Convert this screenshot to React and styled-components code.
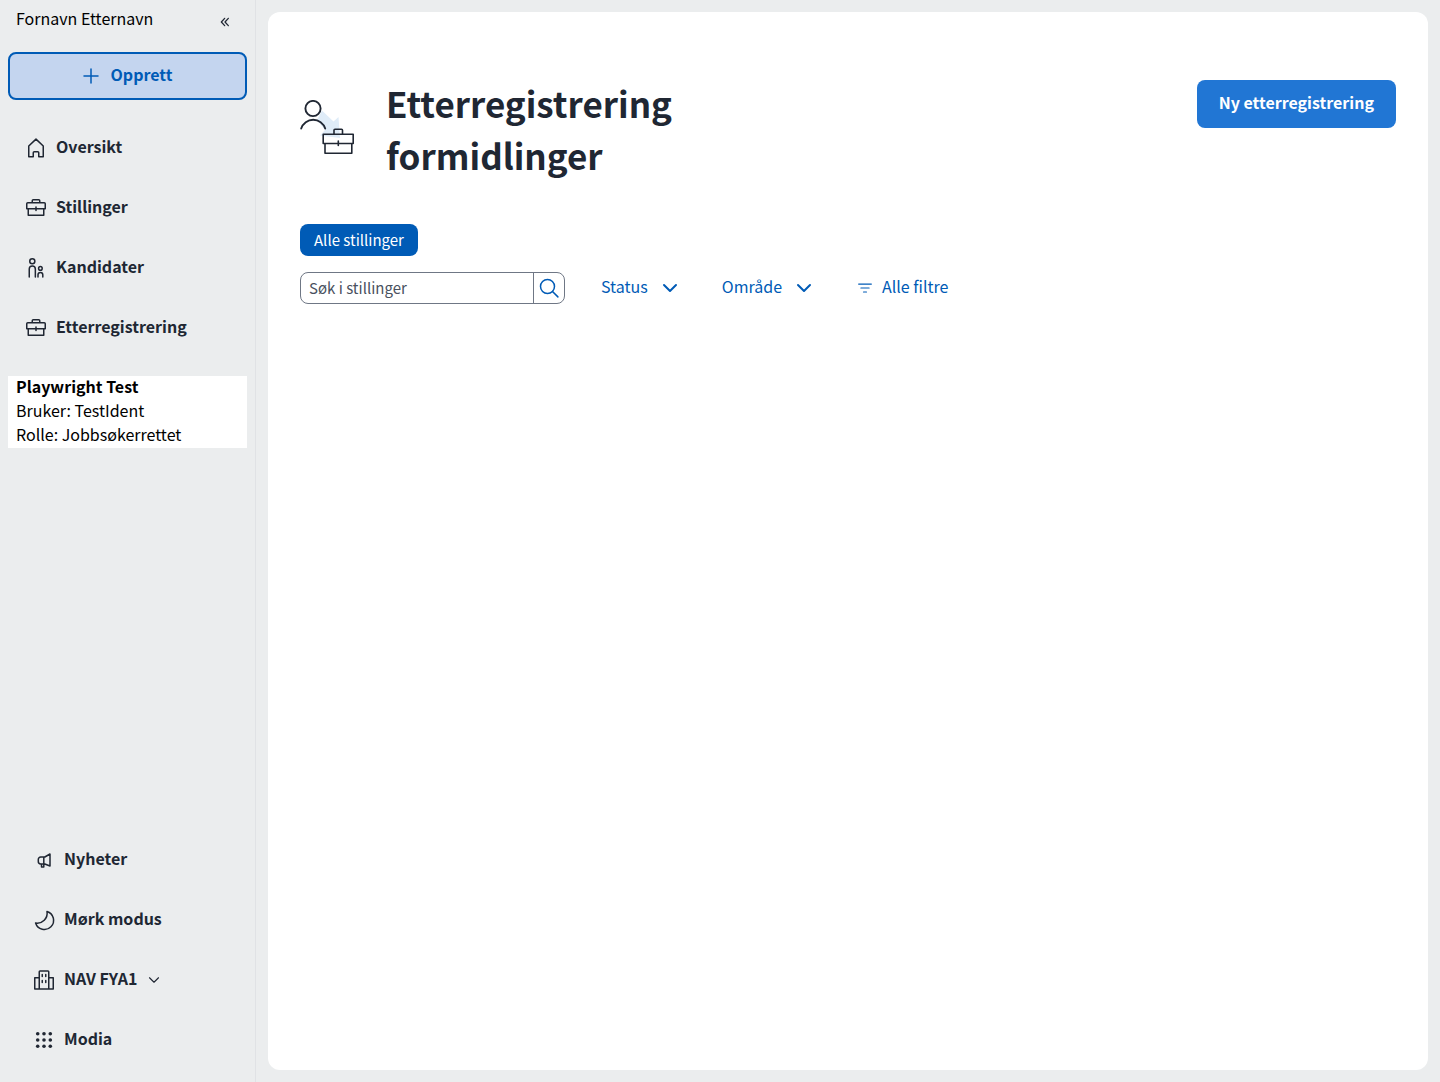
import React from "react";
import styled, { createGlobalStyle } from "styled-components";

const color = {
  text: "#202733",
  accent: "#005bb6",
  accentStrong: "#2176d4",
  accentSoft: "#c4d5ef",
  border: "#6f7785",
  page: "#ebedee",
  divider: "#e0e2e5",
};

const GlobalStyle = createGlobalStyle`
  *, *::before, *::after { box-sizing: border-box; }
  body {
    margin: 0;
    background: ${color.page};
    color: #000;
    font-family: "Noto Sans CJK JP", "Noto Sans", sans-serif;
    font-size: 16px;
    line-height: 24px;
  }
  button, input { font: inherit; }
  button { cursor: pointer; }
`;

const Layout = styled.div`
  display: flex;
  min-height: 100vh;
`;

const Sidebar = styled.aside`
  display: flex;
  flex-direction: column;
  flex: 0 0 256px;
  padding: 8px 8px 18px;
  border-right: 1px solid ${color.divider};
`;

const Text = styled.span`
  display: block;
  padding-bottom: 4px;
  line-height: 20px;
  font-weight: ${(p) => (p.$strong ? 700 : "inherit")};
`;

const UserBar = styled.div`
  display: flex;
  align-items: center;
  justify-content: space-between;
  height: 24px;
  margin-bottom: 20px;
  padding: 0 14px 0 8px;
`;

const CollapseButton = styled.button`
  display: flex;
  padding: 4px 0 0;
  border: 0;
  background: none;
  color: ${color.text};
`;

const CreateButton = styled.button`
  display: flex;
  align-items: center;
  justify-content: center;
  gap: 8px;
  height: 48px;
  margin-bottom: 24px;
  padding: 0 20px 0 16px;
  border: 2px solid ${color.accent};
  border-radius: 8px;
  background: ${color.accentSoft};
  color: ${color.accent};
  font-weight: 600;
`;

const NavList = styled.nav`
  display: flex;
  flex-direction: column;
  gap: 12px;
  padding-left: ${(p) => (p.$inset ? "8px" : "0")};
`;

const NavLink = styled.a`
  display: flex;
  align-items: center;
  gap: 8px;
  height: 48px;
  padding: 0 16px;
  color: ${color.text};
  font-weight: 600;
  text-decoration: none;
`;

const NavButton = styled(NavLink).attrs({ as: "button", type: "button" })`
  border: 0;
  background: none;
  text-align: left;
`;

const TestUser = styled.div`
  margin: 24px 0 auto;
  padding: 0 8px;
  background: #fff;
`;

const Main = styled.main`
  flex: 1;
  min-width: 0;
  margin: 12px;
  padding: 68px 32px;
  border-radius: 12px;
  background: #fff;
`;

const PageHeader = styled.header`
  display: flex;
  align-items: flex-start;
  justify-content: space-between;
  margin-bottom: 40px;
`;

const TitleGroup = styled.div`
  display: flex;
  align-items: center;
  gap: 22px;
  color: ${color.text};
`;

const Title = styled.h1`
  max-width: 400px;
  margin: -3px 0 3px;
  font-size: 35px;
  font-weight: 700;
  line-height: 52px;
`;

const PrimaryButton = styled.button`
  height: 48px;
  padding: 0 22px;
  border: 0;
  border-radius: 8px;
  background: ${color.accentStrong};
  color: #fff;
  font-weight: 600;
`;

const Chip = styled.button`
  height: 32px;
  margin-bottom: 16px;
  padding: 0 14px;
  border: 0;
  border-radius: 8px;
  background: ${color.accent};
  color: #fff;
  font-size: 15px;
`;

const FilterBar = styled.div`
  display: flex;
  align-items: center;
`;

const SearchForm = styled.form`
  display: flex;
  width: 265px;
  height: 32px;
  margin-right: 16px;
  border: 1px solid ${color.border};
  border-radius: 8px;
`;

const SearchInput = styled.input`
  flex: 1;
  min-width: 0;
  padding: 0 8px;
  border: 0;
  border-radius: 8px;
  background: none;
  color: ${color.text};
  font-size: 15px;

  &::placeholder { color: #49515e; opacity: 1; }
`;

const SearchButton = styled.button`
  display: flex;
  align-items: center;
  justify-content: center;
  width: 31px;
  padding: 0;
  border: 0;
  border-left: 1px solid ${color.border};
  background: none;
  color: ${color.accent};
`;

const FilterButton = styled.button`
  display: flex;
  align-items: center;
  gap: ${(p) => (p.$menu ? "10px" : "8px")};
  height: 32px;
  padding: 0 20px;
  border: 0;
  background: none;
  color: ${color.accent};
`;

const Svg = styled.svg`
  flex: none;
  fill: none;
  stroke: currentColor;
  stroke-linejoin: round;
  stroke-linecap: round;
`;

const Icon = ({ size = 24, weight = 1.5, children }) => (
  <Svg width={size} height={size} viewBox="0 0 24 24" strokeWidth={weight} aria-hidden="true">
    {children}
  </Svg>
);

const HouseIcon = () => (
  <Icon>
    <path d="M12 3.1 4.75 10v10.75h4.5v-4a1 1 0 0 1 1-1h3.5a1 1 0 0 1 1 1v4h4.5V10z" />
  </Icon>
);

const BriefcaseIcon = () => (
  <Icon>
    <path d="M2.75 7.75a1 1 0 0 1 1-1h16.5a1 1 0 0 1 1 1v5H2.75zM4.25 12.75v6.5h15.5v-6.5M8.25 6.5V4.75a1 1 0 0 1 1-1h5.5a1 1 0 0 1 1 1V6.5M12 11v3.5" />
  </Icon>
);

const PeopleIcon = () => (
  <Icon>
    <circle cx="8.3" cy="5.3" r="2.55" />
    <circle cx="16.4" cy="12.4" r="1.8" />
    <path d="M5.25 21v-8a3.05 3.05 0 0 1 6.1 0v8M14 21v-2.2a2.4 2.4 0 0 1 4.8 0V21" />
  </Icon>
);

const MegaphoneIcon = () => (
  <Icon>
    <path d="M18 6v12L12.800 16H8.700a2.400 2.400 0 0 1-2.400-2.400v-2.200A2.400 2.400 0 0 1 8.700 9h4.100zM11.800 9v7M9.500 16v3h2.300v-3" />
  </Icon>
);

const MoonIcon = () => (
  <Icon>
    <path d="M15 3.5A9.2 9.2 0 1 1 3.6 15 10 10 0 0 0 15 3.5z" />
  </Icon>
);

const BuildingIcon = () => (
  <Icon>
    <path d="M7.25 21V3.75a.75.75 0 0 1 .75-.75h8a.75.75 0 0 1 .75.75V21M7.25 9.75h-4.5V21h18.5V9.75h-4.5M10.250 6.500v2M13.750 6.500v2M10.250 12.500v2M13.750 12.500v2" />
  </Icon>
);

const DotsIcon = () => (
  <Icon>
    {[5.7, 12, 18.3].map((y) =>
      [5.7, 12, 18.3].map((x) => (
        <circle key={`${x}-${y}`} cx={x} cy={y} r="1.8" fill="currentColor" stroke="none" />
      ))
    )}
  </Icon>
);

const PlusIcon = () => (
  <Icon>
    <path d="M12 5v14M5 12h14" />
  </Icon>
);

const ChevronIcon = ({ size = 24, weight = 2 }) => (
  <Icon size={size} weight={weight}>
    <path d="m6 9 6 6 6-6" />
  </Icon>
);

const CollapseIcon = () => (
  <Icon size={16} weight={1.9}>
    <path d="M11.500 6.500 6.500 12l5 5.500M17 6.500 12 12l5 5.500" />
  </Icon>
);

const SearchIcon = () => (
  <Icon>
    <circle cx="10.500" cy="10.500" r="7" />
    <path d="m15.500 15.500 5.400 5.400" />
  </Icon>
);

const FilterIcon = () => (
  <Icon size={18}>
    <path d="M3.500 6.750h17M6.500 12h11M10 17.250h4" />
  </Icon>
);

const PlacementArt = () => (
  <Svg width="64" height="64" viewBox="0 0 64 64" strokeWidth="1.900" aria-hidden="true">
    <path d="m22 10.500 11.500 11 5-4.500 1.500 21-20-2.500 5-5.500-8-10z" fill="#dfecf8" stroke="none" />
    <circle cx="13" cy="8.500" r="7.600" />
    <path d="M1.200 28.500a12.600 12.600 0 0 1 24 0" />
    <path d="M23.200 34.200h30v9.300h-30zM25 43.500v9.800h26.800v-9.800M34 34v-3.700a1 1 0 0 1 1-1h6.500a1 1 0 0 1 1 1V34M38.300 41v4.500" strokeWidth="1.600" />
  </Svg>
);

const mainNav = [
  { label: "Oversikt", Glyph: HouseIcon },
  { label: "Stillinger", Glyph: BriefcaseIcon },
  { label: "Kandidater", Glyph: PeopleIcon },
  { label: "Etterregistrering", Glyph: BriefcaseIcon },
];

export default function App() {
  return (
    <>
      <GlobalStyle />
      <Layout>
        <Sidebar>
          <UserBar>
            <Text>Fornavn Etternavn</Text>
            <CollapseButton type="button" aria-label="Skjul meny">
              <CollapseIcon />
            </CollapseButton>
          </UserBar>
          <CreateButton type="button">
            <PlusIcon />
            <Text>Opprett</Text>
          </CreateButton>
          <NavList aria-label="Hovedmeny">
            {mainNav.map(({ label, Glyph }) => (
              <NavLink key={label} href="#">
                <Glyph />
                <Text>{label}</Text>
              </NavLink>
            ))}
          </NavList>
          <TestUser>
            <Text $strong>Playwright Test</Text>
            <Text>Bruker: TestIdent</Text>
            <Text>Rolle: Jobbsøkerrettet</Text>
          </TestUser>
          <NavList $inset aria-label="Verktøy">
            <NavButton><MegaphoneIcon /><Text>Nyheter</Text></NavButton>
            <NavButton><MoonIcon /><Text>Mørk modus</Text></NavButton>
            <NavButton>
              <BuildingIcon />
              <Text>NAV FYA1</Text>
              <ChevronIcon size={18} weight={1.5} />
            </NavButton>
            <NavButton><DotsIcon /><Text>Modia</Text></NavButton>
          </NavList>
        </Sidebar>
        <Main>
          <PageHeader>
            <TitleGroup>
              <PlacementArt />
              <Title>Etterregistrering formidlinger</Title>
            </TitleGroup>
            <PrimaryButton type="button"><Text>Ny etterregistrering</Text></PrimaryButton>
          </PageHeader>
          <Chip type="button" aria-pressed="true">Alle stillinger</Chip>
          <FilterBar>
            <SearchForm role="search" onSubmit={(e) => e.preventDefault()}>
              <SearchInput type="text" aria-label="Søk i stillinger" placeholder="Søk i stillinger" />
              <SearchButton type="submit" aria-label="Søk">
                <SearchIcon />
              </SearchButton>
            </SearchForm>
            <FilterButton type="button" $menu><Text>Status</Text><ChevronIcon /></FilterButton>
            <FilterButton type="button" $menu><Text>Område</Text><ChevronIcon /></FilterButton>
            <FilterButton type="button"><FilterIcon /><Text>Alle filtre</Text></FilterButton>
          </FilterBar>
        </Main>
      </Layout>
    </>
  );
}
